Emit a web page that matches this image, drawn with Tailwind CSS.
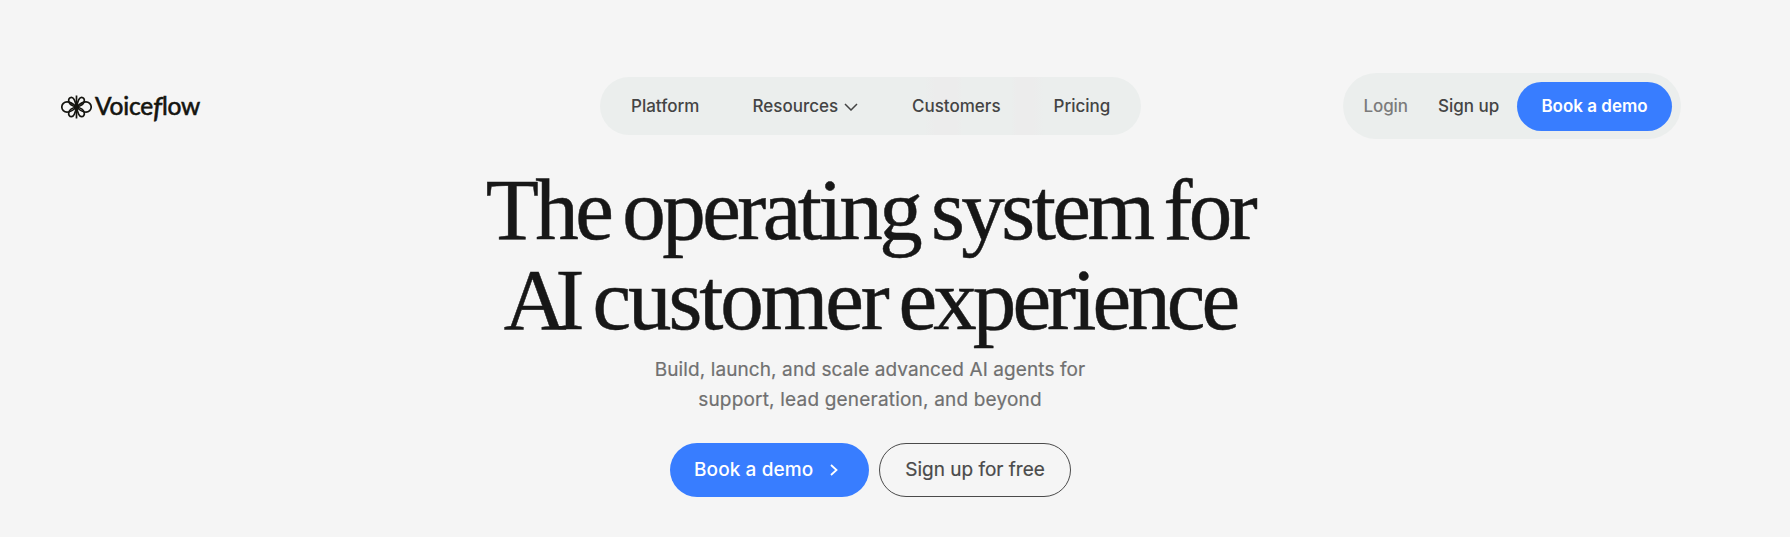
<!DOCTYPE html>
<html lang="en">
<head>
<meta charset="utf-8">
<title>Voiceflow</title>
<script src="https://cdn.jsdelivr.net/npm/@tailwindcss/browser@4"></script>
</head>
<body class="h-[537px] overflow-hidden bg-[#f5f5f5] font-['Inter',sans-serif] text-[#444444]">
<header class="flex h-[66px] mt-[73px] items-center">
  <a class="flex w-[539px] ml-[61px] items-center text-[#14140f]">
    <svg class="w-[31px] h-6 mt-px" viewBox="0 0 31 24" fill="none" stroke="currentColor" stroke-width="1.7">
      <path d="M15.500 0.500V23.500"/>
      <path d="M15.500 12C14.500 7 13 2.300 10.500 2.300C6.500 2.300 5.500 10 15.500 12C5.500 14 6.500 21.700 10.500 21.700C13 21.700 14.500 17 15.500 12"/>
      <path d="M15.500 12C16.500 7 18 2.300 20.500 2.300C24.500 2.300 25.500 10 15.500 12C25.500 14 24.500 21.700 20.500 21.700C18 21.700 16.500 17 15.500 12"/>
      <path d="M15.500 12C12 8.500 9 6.800 6 6.800A5.200 5.200 0 0 0 6 17.200C9 17.200 12 15.500 15.500 12C19 8.500 22 6.800 25 6.800A5.200 5.200 0 0 1 25 17.200C22 17.200 19 15.500 15.500 12"/>
    </svg>
    <span class="ml-[3px] text-[24.5px] leading-8 font-normal font-['Lato',sans-serif] tracking-[-0.2px] whitespace-nowrap [-webkit-text-stroke:0.6px_#14140f]">Voice<span class="relative top-[3px] inline-block w-[9px] text-[28px] leading-6 italic">f</span>low</span>
  </a>
  <nav class="flex h-[58px] w-[541px] items-center rounded-full bg-[linear-gradient(90deg,#ebeeed_0_60%,#ececec_62%_66%,#ebeeed_67%,#ebeeed_76%,#ececec_77%_80%,#ebeeed_82%)] pl-[31px] pt-[2px] text-[17px] font-medium whitespace-nowrap">
    <a class="w-[121.500px]">Platform</a>
    <a class="flex w-[159.500px] items-center">Resources
      <svg class="ml-[6px] h-[8px] w-[14px]" viewBox="0 0 14 8" fill="none" stroke="currentColor" stroke-width="1.500"><path d="M1 1L7 7L13 1"/></svg>
    </a>
    <a class="w-[141.500px]">Customers</a>
    <a>Pricing</a>
  </nav>
  <div class="ml-[202px] flex h-[66px] w-[338px] items-center rounded-full bg-[#ebeeed] pl-[20.500px] text-[17px] font-medium whitespace-nowrap">
    <a class="w-[74.500px] pt-[2px] tracking-[-0.1px] text-[#7b7b7b]">Login</a>
    <a class="w-[79px] pt-[2px]">Sign up</a>
    <a class="flex h-[49px] w-[155px] items-center justify-center rounded-full bg-[#387dff] pt-[2px] font-semibold text-white">Book a demo</a>
  </div>
</header>
<main class="flex flex-col items-center pr-[50px]">
  <h1 class="mt-[26px] text-center font-['Liberation_Serif',serif] text-[87px] leading-[90px] whitespace-nowrap text-[#171717] [-webkit-text-stroke:0.5px_#171717]">
    <span class="block tracking-[-3.5px] [word-spacing:-6.5px]">The operating system for</span>
    <span class="block tracking-[-3.9px] [word-spacing:-6px]"><span class="tracking-[-11px]">A</span>I <span class="tracking-[-3.100px]">customer</span> experience</span>
  </h1>
  <p class="mt-[10px] flex flex-col items-center text-[19px] leading-[30px] whitespace-nowrap text-[#707070] [-webkit-text-stroke:0.2px_#707070]">
    <span class="tracking-[0.1px]">Build, launch, and scale advanced AI agents for</span>
    <span class="tracking-[0.190px]">support, lead generation, and beyond</span>
  </p>
  <div class="mt-[28px] flex gap-[10px] text-[19px] font-medium whitespace-nowrap">
    <a class="flex h-[54px] w-[199px] items-center rounded-full bg-[#387dff] pl-[24.500px] tracking-[0.1px] text-white">Book a demo
      <svg class="ml-[16.500px] h-3 w-2" viewBox="0 0 8 12" fill="none" stroke="currentColor" stroke-width="1.800"><path d="M1 1L6.500 6L1 11"/></svg>
    </a>
    <a class="flex h-[54px] w-[192px] items-center justify-center rounded-full border border-[#4a4a4a] pl-px font-normal text-[#4a4a4a] [-webkit-text-stroke:0.2px_#4a4a4a]">Sign up for free</a>
  </div>
</main>
</body>
</html>
